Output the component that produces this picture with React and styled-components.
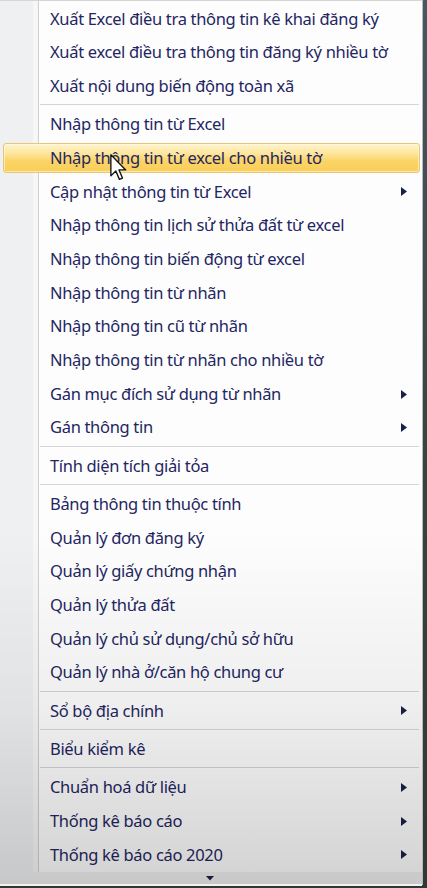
import React from 'react';
import styled, { createGlobalStyle, css } from 'styled-components';

const Global = createGlobalStyle`
  html, body { margin: 0; padding: 0; background: #35403f; }
  body {
    width: 427px;
    height: 888px;
    overflow: hidden;
    font-family: "Noto Sans", "DejaVu Sans", sans-serif;
  }
`;

const Screen = styled.div`
  width: 427px;
  height: 888px;
  background: linear-gradient(to bottom, #4a5660 0%, #38443f 50%, #2e3835 100%);
`;

const Menu = styled.div`
  position: relative;
  width: 423px;
  height: 885px;
  box-sizing: border-box;
  background: #fdfdfd;
  border-top: 1px solid #d6d6d6;
  border-right: 1px solid #b7babd;
  border-bottom: 1px solid #b7babd;
  display: flex;
  flex-direction: column;
  &::after {
    content: '';
    position: absolute;
    inset: 0;
    pointer-events: none;
    background: linear-gradient(
      to bottom,
      rgba(0, 0, 0, 0) 0%,
      rgba(0, 0, 0, 0) 60%,
      rgba(0, 0, 0, 0.06) 80%,
      rgba(0, 0, 0, 0.17) 100%
    );
  }
`;

const List = styled.div`
  flex: 1;
  display: flex;
  flex-direction: column;
  padding-top: 1px;
  background: linear-gradient(
    to right,
    #eef0f2 0,
    #eef0f2 33px,
    #f6f7f7 33px,
    #f6f7f7 38px,
    #cdcfd1 38px,
    #cdcfd1 39px,
    #ffffff 39px,
    #ffffff 40px,
    transparent 40px
  );
`;

const Item = styled.div`
  position: relative;
  flex: none;
  height: 29.7px;
  margin: 2px 2px 2px 3px;
  padding: 0 12px 0 46px;
  box-sizing: border-box;
  display: flex;
  align-items: center;
  justify-content: space-between;
  border: 1px solid transparent;
  border-radius: 3px;
  color: #1f2662;
  font-size: 16.5px;
  letter-spacing: -0.32px;
  line-height: 1;
  white-space: nowrap;
  ${(p) =>
    p.$active &&
    css`
      border-color: #e6c77a;
      background: linear-gradient(
        to bottom,
        #fff4cf 0%,
        #fde59a 35%,
        #fbd467 60%,
        #facf58 100%
      );
      box-shadow: inset 0 0 0 1px rgba(255, 250, 230, 0.6);
    `}
`;

const Label = styled.span`
  display: block;
`;

const Separator = styled.div`
  flex: none;
  height: 4.6px;
  margin: 0 3px 0 40px;
  display: flex;
  flex-direction: column;
  justify-content: center;
  &::before {
    content: '';
    display: block;
    height: 1px;
    background: #d4d5d7;
  }
  &::after {
    content: '';
    display: block;
    height: 1px;
    background: #ffffff;
  }
`;

const ScrollBand = styled.div`
  flex: none;
  height: 14px;
  display: flex;
  align-items: center;
  justify-content: center;
  padding-right: 2px;
  background: #f1f1f1;
`;

const Cursor = styled.svg`
  position: absolute;
  left: 110px;
  top: 153px;
  width: 17px;
  height: 27px;
  z-index: 2;
  pointer-events: none;
`;

const SubArrow = () => (
  <svg width="6" height="9" viewBox="0 0 6 9" style={{ display: 'block' }}>
    <polygon points="0,0 6,4.5 0,9" fill="#1a2148" />
  </svg>
);

const DownArrow = () => (
  <svg width="8" height="5" viewBox="0 0 8 5" style={{ display: 'block' }}>
    <polygon points="0,0 8,0 4,4.5" fill="#1a2148" />
  </svg>
);

const entries = [
  { t: 'Xuất Excel điều tra thông tin kê khai đăng ký' },
  { t: 'Xuất excel điều tra thông tin đăng ký nhiều tờ' },
  { t: 'Xuất nội dung biến động toàn xã' },
  { sep: true },
  { t: 'Nhập thông tin từ Excel' },
  { t: 'Nhập thông tin từ excel cho nhiều tờ', active: true },
  { t: 'Cập nhật thông tin từ Excel', sub: true },
  { t: 'Nhập thông tin lịch sử thửa đất từ excel' },
  { t: 'Nhập thông tin biến động từ excel' },
  { t: 'Nhập thông tin từ nhãn' },
  { t: 'Nhập thông tin cũ từ nhãn' },
  { t: 'Nhập thông tin từ nhãn cho nhiều tờ' },
  { t: 'Gán mục đích sử dụng từ nhãn', sub: true },
  { t: 'Gán thông tin', sub: true },
  { sep: true },
  { t: 'Tính diện tích giải tỏa' },
  { sep: true },
  { t: 'Bảng thông tin thuộc tính' },
  { t: 'Quản lý đơn đăng ký' },
  { t: 'Quản lý giấy chứng nhận' },
  { t: 'Quản lý thửa đất' },
  { t: 'Quản lý chủ sử dụng/chủ sở hữu' },
  { t: 'Quản lý nhà ở/căn hộ chung cư' },
  { sep: true },
  { t: 'Sổ bộ địa chính', sub: true },
  { sep: true },
  { t: 'Biểu kiểm kê' },
  { sep: true },
  { t: 'Chuẩn hoá dữ liệu', sub: true },
  { t: 'Thống kê báo cáo', sub: true },
  { t: 'Thống kê báo cáo 2020', sub: true },
];

export default function App() {
  return (
    <Screen>
      <Global />
      <Menu>
        <List>
          {entries.map((e, i) =>
            e.sep ? (
              <Separator key={i} />
            ) : (
              <Item key={i} $active={e.active}>
                <Label>{e.t}</Label>
                {e.sub && <SubArrow />}
              </Item>
            )
          )}
        </List>
        <ScrollBand>
          <DownArrow />
        </ScrollBand>
        <Cursor viewBox="0 0 12.5 20">
          <path
            d="M0.6 0.6 L0.6 16.2 L4.3 12.6 L6.9 18.8 L9.2 17.8 L6.6 11.8 L11.6 11.8 Z"
            fill="#ffffff"
            stroke="#111111"
            strokeWidth="1"
            strokeLinejoin="round"
          />
        </Cursor>
      </Menu>
    </Screen>
  );
}
